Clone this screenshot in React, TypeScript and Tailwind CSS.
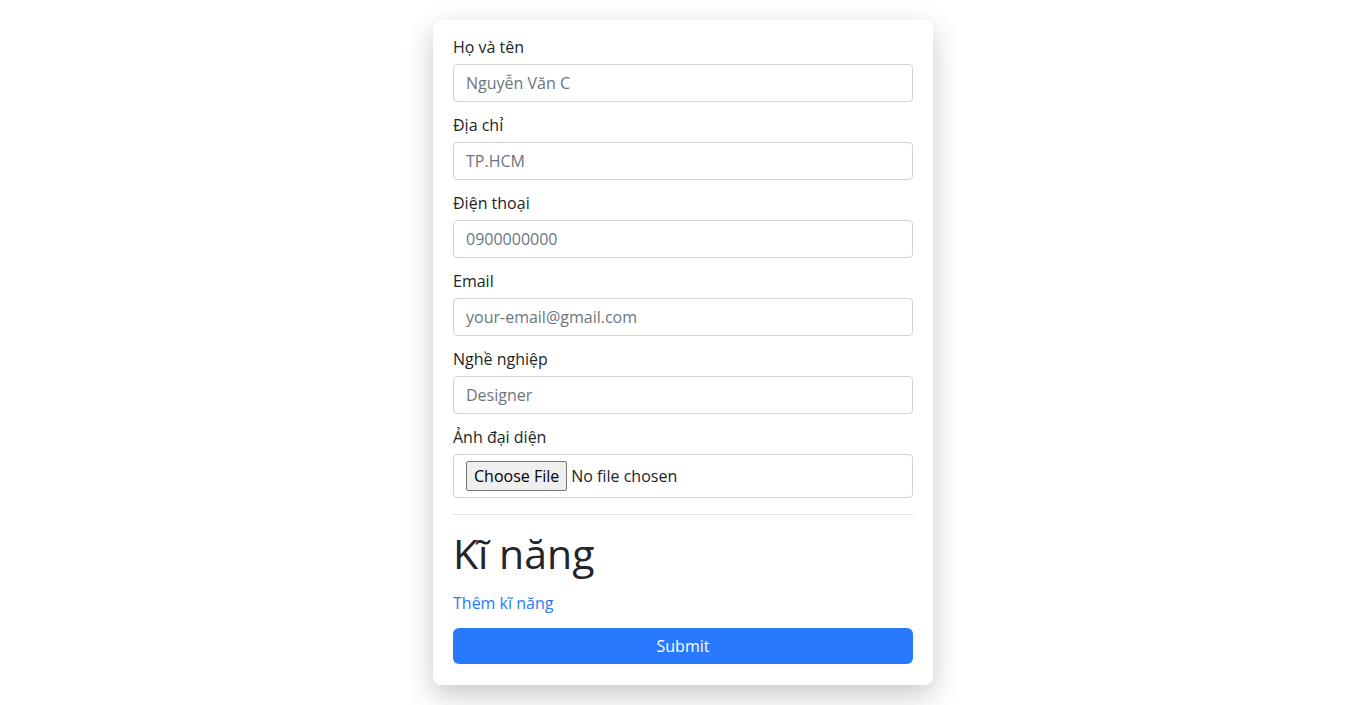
import React from "react";

const font = { fontFamily: '"Open Sans", "Noto Sans", sans-serif' };

function Field({ label, placeholder, type = "text" }: { label: string; placeholder: string; type?: string }) {
  return (
    <div className="mb-[11px]">
      <label className="block h-6 leading-6 text-[16px] text-[#212529] mb-[5px]">{label}</label>
      <input
        type={type}
        placeholder={placeholder}
        className="block w-full h-[38px] px-3 text-[16px] text-[#212529] placeholder:text-[#6c757d] border border-[#ced4da] rounded-[4px] bg-white outline-none"
      />
    </div>
  );
}

export default function App() {
  return (
    <div className="min-h-[705px] w-full bg-white flex justify-center pt-5" style={font}>
      <form className="w-[500px] h-[665px] bg-white rounded-[8px] shadow-[0_10px_28px_rgba(0,0,0,0.22)] px-5 pt-[15px] pb-5">
        <Field label="Họ và tên" placeholder="Nguyễn Văn C" />
        <Field label="Địa chỉ" placeholder="TP.HCM" />
        <Field label="Điện thoại" placeholder="0900000000" />
        <Field label="Email" placeholder="your-email@gmail.com" type="email" />
        <Field label="Nghề nghiệp" placeholder="Designer" />
        <div>
          <label className="block h-6 leading-6 text-[16px] text-[#212529] mb-[5px]">Ảnh đại diện</label>
          <input
            type="file"
            className="block w-full h-[44px] px-3 py-[6px] text-[16px] text-[#212529] border border-[#ced4da] rounded-[4px] bg-white file:h-[30px] file:bg-[#efefef] file:border file:border-[#767676] file:rounded-[2px] file:px-[7px] file:mr-[4px] file:text-[#000]"
          />
        </div>
        <hr className="mt-4 mb-[14px] border-0 border-t border-[#e3e3e3]" />
        <h1 className="text-[41px] leading-[48px] text-[#212529] font-normal mb-[14px]">Kĩ năng</h1>
        <a href="#" className="block text-[16px] leading-6 text-[#2979ff] mb-[13px]">Thêm kĩ năng</a>
        <button
          type="button"
          className="block w-full h-9 rounded-[6px] bg-[#2979ff] text-white text-[16px]"
        >
          Submit
        </button>
      </form>
    </div>
  );
}
